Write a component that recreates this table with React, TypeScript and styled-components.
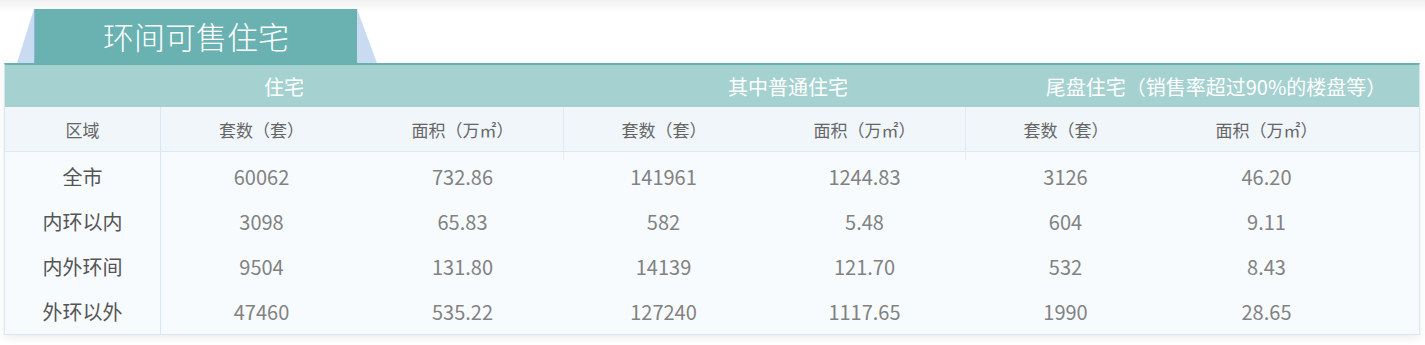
import React from 'react';
import styled, { createGlobalStyle } from 'styled-components';

const GlobalStyle = createGlobalStyle`
  html, body { margin: 0; padding: 0; background: #fff; }
  body { font-family: "Noto Sans CJK SC", "Noto Sans", sans-serif; }
`;

const Page = styled.div`
  width: 1425px;
  height: 345px;
  box-sizing: border-box;
  padding: 9px 5px 0 4px;
  background: linear-gradient(#f1f1f1, #ffffff 12px);
`;

const TabBar = styled.div`
  display: flex;
  padding-left: 13px;
  height: 54px;
`;

const TabWing = styled.div`
  display: flex;
  width: 360px;
  height: 54px;
  background: #c9dbf1;
  clip-path: polygon(17px 0, 340px 0, 100% 100%, 0 100%);
`;

const Tab = styled.div`
  margin-left: 17px;
  width: 323px;
  height: 54px;
  box-sizing: border-box;
  border-left: 1px solid #8fb3dd;
  background: #69b2b1;
  color: #fff;
  font-size: 31px;
  font-weight: 300;
  line-height: 1;
  display: flex;
  align-items: center;
  justify-content: center;
  padding-bottom: 2px;
`;

const Table = styled.div`
  border: 1px solid #d7e6f4;
  border-top: 2px solid #69b1b0;
  background: #f7fbfe;
  box-shadow: 0 3px 8px rgba(0, 0, 0, 0.07);
`;

const GroupRow = styled.div`
  display: grid;
  grid-template-columns: 558px 450px 1fr;
  height: 42px;
  background: #a5d1d0;
  color: #fff;
  font-size: 20px;
`;

const GroupCell = styled.div`
  display: flex;
  align-items: center;
  justify-content: center;
`;

const HeadRow = styled.div`
  display: grid;
  grid-template-columns: 156px repeat(6, 201px) 1fr;
  height: 45px;
  box-sizing: border-box;
  background: #f1f6fb;
  border-bottom: 1px solid #dde9f5;
  color: #666;
  font-size: 17px;
`;

const HeadCell = styled.div<{ $divider?: 'full' | 'group' }>`
  position: relative;
  display: flex;
  align-items: center;
  justify-content: center;
  box-sizing: border-box;
  border-right: ${(p) => (p.$divider === 'full' ? '1px solid #d9e8f6' : 'none')};
  border-left: ${(p) => (p.$divider === 'group' ? '1px solid #dfeaf5' : 'none')};
  ${(p) =>
    p.$divider === 'group' &&
    `
    &::after {
      content: '';
      position: absolute;
      left: -1px;
      bottom: -9px;
      width: 1px;
      height: 9px;
      background: #e3edf6;
    }
  `}
`;

const Body = styled.div`
  padding-top: 2px;
`;

const DataRow = styled.div`
  display: grid;
  grid-template-columns: 156px repeat(6, 201px) 1fr;
  height: 45px;
  font-size: 20px;
  color: #828282;
`;

const LabelCell = styled.div`
  display: flex;
  align-items: center;
  justify-content: center;
  box-sizing: border-box;
  border-right: 1px solid #d9e8f6;
  color: #555;
  margin-top: -2px;
  padding-top: 2px;
  height: 47px;
`;

const NumCell = styled.div`
  display: flex;
  align-items: center;
  justify-content: center;
`;

const groups = ['住宅', '其中普通住宅', '尾盘住宅（销售率超过90%的楼盘等）'];
const heads = ['套数（套）', '面积（万㎡）', '套数（套）', '面积（万㎡）', '套数（套）', '面积（万㎡）'];
const rows: [string, string[]][] = [
  ['全市', ['60062', '732.86', '141961', '1244.83', '3126', '46.20']],
  ['内环以内', ['3098', '65.83', '582', '5.48', '604', '9.11']],
  ['内外环间', ['9504', '131.80', '14139', '121.70', '532', '8.43']],
  ['外环以外', ['47460', '535.22', '127240', '1117.65', '1990', '28.65']],
];

export default function App() {
  return (
    <>
      <GlobalStyle />
      <Page>
        <TabBar>
          <TabWing>
            <Tab>环间可售住宅</Tab>
          </TabWing>
        </TabBar>
        <Table>
          <GroupRow>
            {groups.map((g) => (
              <GroupCell key={g}>{g}</GroupCell>
            ))}
          </GroupRow>
          <HeadRow>
            <HeadCell $divider="full">区域</HeadCell>
            {heads.map((h, i) => (
              <HeadCell key={i} $divider={i === 2 || i === 4 ? 'group' : undefined}>
                {h}
              </HeadCell>
            ))}
            <HeadCell />
          </HeadRow>
          <Body>
            {rows.map(([label, vals]) => (
              <DataRow key={label}>
                <LabelCell>{label}</LabelCell>
                {vals.map((v, i) => (
                  <NumCell key={i}>{v}</NumCell>
                ))}
                <NumCell />
              </DataRow>
            ))}
          </Body>
        </Table>
      </Page>
    </>
  );
}
